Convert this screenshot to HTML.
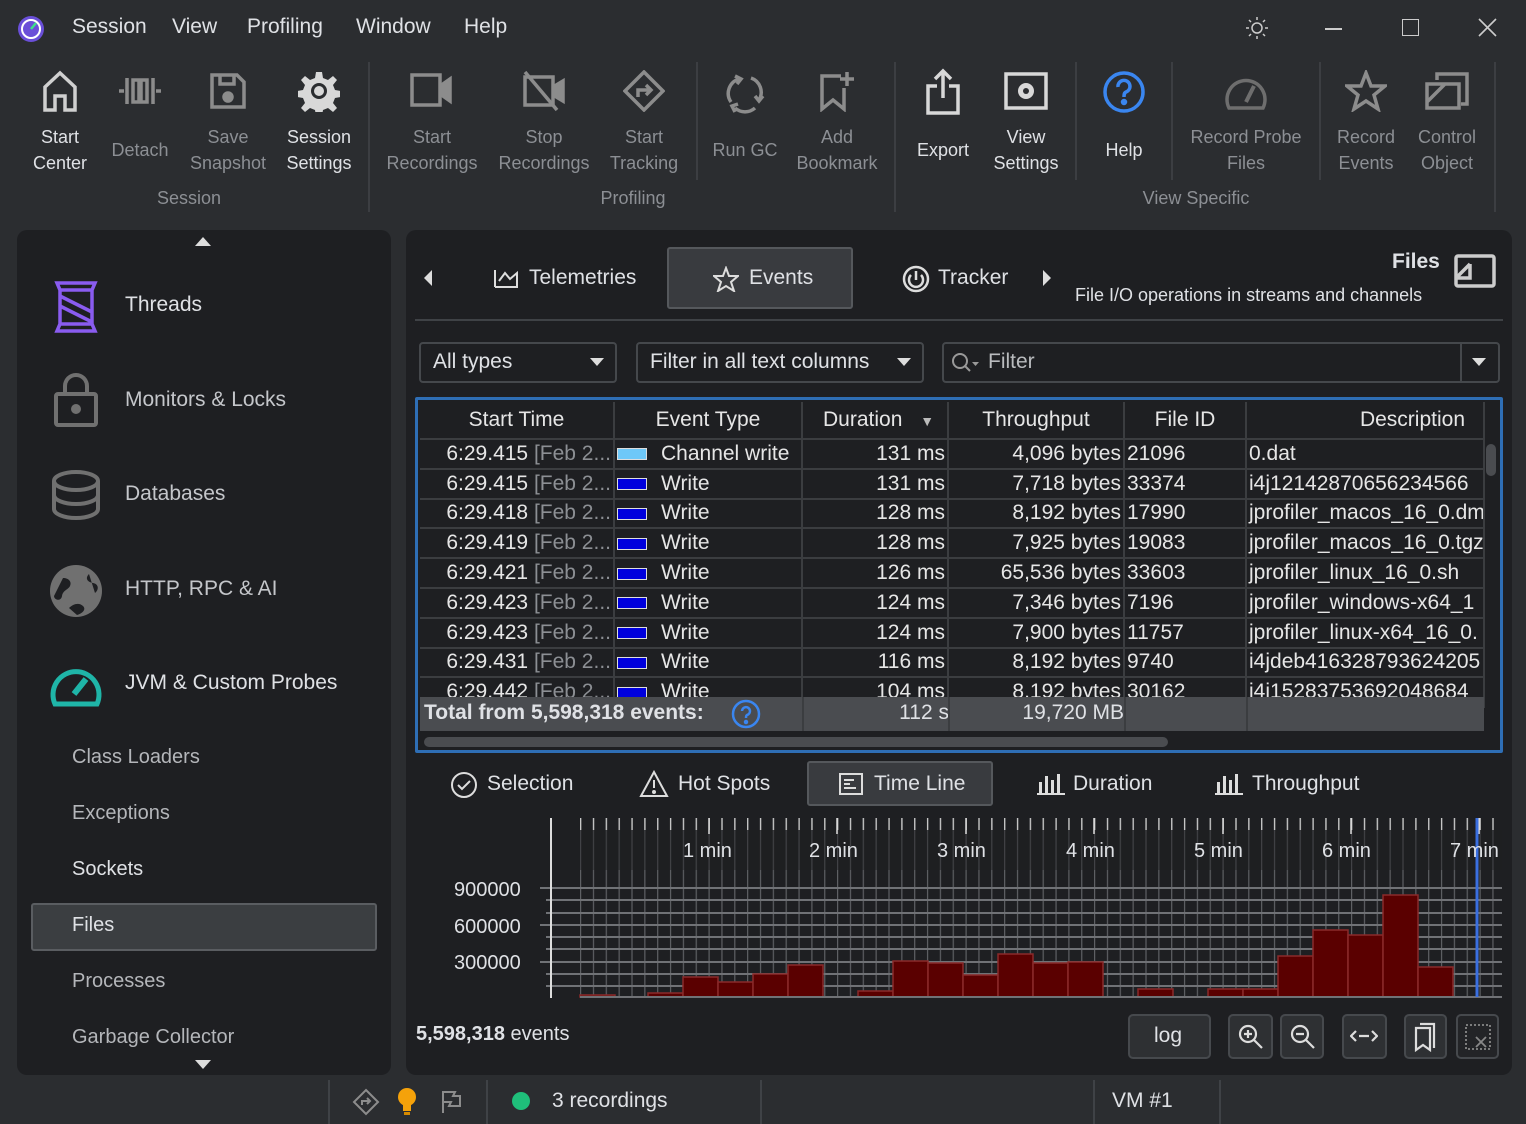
<!DOCTYPE html>
<html><head><meta charset="utf-8">
<style>
*{box-sizing:border-box;margin:0;padding:0}
body{width:1526px;height:1124px;background:#2b2d30;font-family:"Liberation Sans",sans-serif;color:#dfe1e5;position:relative;overflow:hidden}
.a{position:absolute;white-space:nowrap}
.m{font-size:21px;top:15px;color:#dfe1e5}
.tb{position:absolute;text-align:center;font-size:18px;line-height:26px;color:#8c8f94;transform:translateX(-50%);white-space:nowrap}
.tb.en{color:#dfe1e5}
.ic{position:absolute;transform:translateX(-50%)}
.sep{position:absolute;top:62px;width:2px;height:150px;background:#3c3e42}
.sep.s{height:118px}
.grp{position:absolute;font-size:18px;color:#8c8f94;top:188px;transform:translateX(-50%)}
.panel{position:absolute;background:#1e1f22;border-radius:10px}
.si{position:absolute;font-size:21px;color:#c4c6ca}
.sm{position:absolute;font-size:20px;color:#b4b6ba;left:72px}
.combo{position:absolute;border:2px solid #45484c;border-radius:4px;background:#1e1f22;font-size:21px;color:#dfe1e5;padding:6px 12px}
table{border-collapse:collapse;font-size:21px;color:#e6e6e6}
td{height:29.8px;border-right:2px solid #3b3d40;border-bottom:2px solid #3b3d40;padding:0 2px;overflow:hidden;white-space:nowrap;line-height:26px}
.r{text-align:right}
.dim{color:#8c8f94}
.sw{display:inline-block;width:30px;height:12px;border:1px solid #ddd;vertical-align:middle;margin-right:14px;background:#0000dd}
.btn{position:absolute;border:2px solid #46494d;border-radius:5px;background:#2e3033}
.bt{position:absolute;font-size:21px;color:#dfe1e5}
</style></head><body>

<svg class="a" style="left:17px;top:15px" width="28" height="28"><circle cx="14" cy="14" r="13" fill="#6a4fd8"/><circle cx="14" cy="14" r="9" fill="none" stroke="#fff" stroke-width="2"/><path d="M14 14 L19 8" stroke="#3fe08a" stroke-width="2.5"/></svg>
<div class="a m" style="left:72px">Session</div>
<div class="a m" style="left:172px">View</div>
<div class="a m" style="left:247px">Profiling</div>
<div class="a m" style="left:356px">Window</div>
<div class="a m" style="left:464px">Help</div>
<svg class="a" style="left:1245px;top:16px" width="24" height="24" fill="none" stroke="#ccc" stroke-width="1.5"><circle cx="12" cy="12" r="5"/><path d="M12 1v3M12 20v3M1 12h3M20 12h3M4 4l2 2M18 18l2 2M4 20l2-2M18 6l2-2"/></svg>
<div class="a" style="left:1325px;top:28px;width:17px;height:1.5px;background:#ccc"></div>
<div class="a" style="left:1402px;top:19px;width:17px;height:17px;border:1.5px solid #ccc"></div>
<svg class="a" style="left:1478px;top:18px" width="19" height="19" stroke="#ccc" stroke-width="1.6"><path d="M1 1L18 18M18 1L1 18"/></svg>

<svg class="ic" style="left:60px;top:70px" width="36" height="42" fill="none" stroke="#d0d0d0" stroke-width="3.5"><path d="M3 40V17L18 3L33 17V40H23V26H13V40Z"/></svg>
<svg class="ic" style="left:140px;top:72px" width="46" height="38" fill="none" stroke="#8c8c8c" stroke-width="3.5"><path d="M2 19h5M39 19h5M10 6v26M36 6v26M16 8h6v22h-6zM24 8h6v22h-6z"/></svg>
<svg class="ic" style="left:228px;top:72px" width="38" height="38" fill="none" stroke="#8c8c8c" stroke-width="3.5"><path d="M3 3h25l7 7v25H3Z M11 3v9h14V3"/><circle cx="19" cy="25" r="4" fill="#8c8c8c"/></svg>
<svg class="ic" style="left:319px;top:70px" width="42" height="42" fill="#d8d8d8"><path d="M18 2h6l1 6 5 2 5-4 4 4-4 5 2 5 6 1v6l-6 1-2 5 4 5-4 4-5-4-5 2-1 6h-6l-1-6-5-2-5 4-4-4 4-5-2-5-6-1v-6l6-1 2-5-4-5 4-4 5 4 5-2Z"/><circle cx="21" cy="21" r="8" fill="#2b2d30"/><circle cx="21" cy="21" r="5"/></svg>
<svg class="ic" style="left:432px;top:72px" width="44" height="36" fill="none" stroke="#8c8c8c" stroke-width="3.5"><rect x="2" y="3" width="28" height="30"/><path d="M30 14l10-7v22l-10-7" fill="#8c8c8c"/></svg>
<svg class="ic" style="left:544px;top:70px" width="46" height="42" fill="none" stroke="#8c8c8c" stroke-width="3.5"><rect x="4" y="7" width="28" height="28"/><path d="M32 17l10-6v20l-10-6" fill="#8c8c8c"/><path d="M4 2L36 40"/></svg>
<svg class="ic" style="left:644px;top:70px" width="42" height="42" fill="none" stroke="#8c8c8c" stroke-width="3.5"><path d="M21 2L40 21L21 40L2 21Z"/><path d="M15 27v-7h12M23 15l5 5-5 5"/></svg>
<svg class="ic" style="left:745px;top:70px" width="44" height="46" fill="none" stroke="#8c8c8c" stroke-width="3.5"><path d="M8 32A15 15 0 0 1 16 9M28 8A15 15 0 0 1 36 30M32 38A15 15 0 0 1 12 38"/><path d="M12 6l6 3-4 5M40 26l-4 5-4-5M12 42l-3-6 6-2" /></svg>
<svg class="ic" style="left:837px;top:70px" width="40" height="42" fill="none" stroke="#8c8c8c" stroke-width="3.5"><path d="M24 6H5v33l11-9 11 9V18M30 2v14M23 9h14"/></svg>
<svg class="ic" style="left:943px;top:68px" width="36" height="48" fill="none" stroke="#d8d8d8" stroke-width="3.5"><path d="M12 18H3v27h30V18h-9M18 30V3M10 11l8-8 8 8"/></svg>
<svg class="ic" style="left:1026px;top:72px" width="44" height="38"><rect x="2" y="2" width="40" height="34" fill="none" stroke="#d8d8d8" stroke-width="3.5"/><circle cx="22" cy="19" r="8" fill="#d8d8d8"/><circle cx="22" cy="19" r="3" fill="#2b2d30"/></svg>
<svg class="ic" style="left:1124px;top:70px" width="44" height="44" fill="none" stroke="#3a86f0" stroke-width="3.5"><circle cx="22" cy="22" r="19"/><path d="M16 17a6 6 0 1 1 8 5c-2 1-2 3-2 5"/><circle cx="22" cy="32" r="1.5" fill="#3a86f0"/></svg>
<svg class="ic" style="left:1246px;top:72px" width="44" height="40" fill="none" stroke="#6e6e6e" stroke-width="3.5"><path d="M5 36A19 19 0 1 1 39 36Z"/><path d="M22 30L30 14" stroke-width="4"/></svg>
<svg class="ic" style="left:1366px;top:70px" width="42" height="42" fill="none" stroke="#8c8c8c" stroke-width="3.5"><path d="M21 3l5 13h14l-11 9 4 14-12-8-12 8 4-14-11-9h14Z"/></svg>
<svg class="ic" style="left:1447px;top:72px" width="44" height="38" fill="none" stroke="#8c8c8c" stroke-width="3.5"><path d="M12 8V2h30v30h-6M2 12h32v24H2ZM2 30L20 12"/></svg>

<div class="tb en" style="left:60px;top:124px">Start<br>Center</div>
<div class="tb" style="left:140px;top:137px">Detach</div>
<div class="tb" style="left:228px;top:124px">Save<br>Snapshot</div>
<div class="tb en" style="left:319px;top:124px">Session<br>Settings</div>
<div class="tb" style="left:432px;top:124px">Start<br>Recordings</div>
<div class="tb" style="left:544px;top:124px">Stop<br>Recordings</div>
<div class="tb" style="left:644px;top:124px">Start<br>Tracking</div>
<div class="tb" style="left:745px;top:137px">Run GC</div>
<div class="tb" style="left:837px;top:124px">Add<br>Bookmark</div>
<div class="tb en" style="left:943px;top:137px">Export</div>
<div class="tb en" style="left:1026px;top:124px">View<br>Settings</div>
<div class="tb en" style="left:1124px;top:137px">Help</div>
<div class="tb" style="left:1246px;top:124px">Record Probe<br>Files</div>
<div class="tb" style="left:1366px;top:124px">Record<br>Events</div>
<div class="tb" style="left:1447px;top:124px">Control<br>Object</div>
<div class="sep" style="left:368px"></div><div class="sep s" style="left:696px"></div><div class="sep" style="left:894px"></div><div class="sep s" style="left:1075px"></div><div class="sep s" style="left:1171px"></div><div class="sep s" style="left:1319px"></div><div class="sep" style="left:1494px"></div>
<div class="grp" style="left:189px">Session</div>
<div class="grp" style="left:633px">Profiling</div>
<div class="grp" style="left:1196px">View Specific</div>

<div class="panel" style="left:17px;top:230px;width:374px;height:845px"></div>
<svg class="a" style="left:195px;top:237px" width="16" height="9"><path d="M0 9L8 0L16 9Z" fill="#ddd"/></svg>
<svg class="a" style="left:52px;top:280px" width="48" height="54" fill="none" stroke="#8a5cf0" stroke-width="3.5"><path d="M5 3h38l-3 7v34l3 7H5l3-7V10Z M8 10h32M8 44h32M8 16l32 16M8 26l32 16"/></svg>
<div class="si" style="left:125px;top:293px;color:#dfe1e5">Threads</div>
<svg class="a" style="left:54px;top:372px" width="44" height="56" fill="none" stroke="#707070" stroke-width="4"><path d="M11 22V14a11 11 0 0 1 22 0v8"/><rect x="2" y="22" width="40" height="31" rx="2"/><circle cx="22" cy="37" r="3" fill="#707070"/></svg>
<div class="si" style="left:125px;top:388px">Monitors &amp; Locks</div>
<svg class="a" style="left:51px;top:470px" width="50" height="50" fill="none" stroke="#707070" stroke-width="4"><ellipse cx="25" cy="11" rx="22" ry="9"/><path d="M3 11v28c0 5 10 9 22 9s22-4 22-9V11M3 25c0 5 10 9 22 9s22-4 22-9"/></svg>
<div class="si" style="left:125px;top:482px">Databases</div>
<svg class="a" style="left:49px;top:564px" width="54" height="54"><circle cx="27" cy="27" r="26" fill="#707070"/><path d="M14 14c6 0 9 4 7 8s-7 4-8 10-8 4-8 0M40 10c-4 4-2 8 4 9s6 7 2 10M20 44c4-4 10-6 14-2s-2 8-6 9" fill="#1e1f22"/></svg>
<div class="si" style="left:125px;top:577px">HTTP, RPC &amp; AI</div>
<svg class="a" style="left:49px;top:662px" width="54" height="46" fill="none" stroke="#1fb5a8" stroke-width="5"><path d="M6 42A23 23 0 1 1 48 42Z"/><path d="M25 32L37 17" stroke-width="6"/></svg>
<div class="si" style="left:125px;top:671px;color:#dfe1e5">JVM &amp; Custom Probes</div>
<div class="sm" style="top:746px">Class Loaders</div>
<div class="sm" style="top:802px">Exceptions</div>
<div class="sm" style="top:858px;color:#dfe1e5">Sockets</div>
<div class="a" style="left:31px;top:903px;width:346px;height:48px;background:#3b3e41;border:2px solid #5a5d61;border-radius:3px"></div>
<div class="sm" style="top:914px;color:#dfe1e5">Files</div>
<div class="sm" style="top:970px">Processes</div>
<div class="sm" style="top:1026px">Garbage Collector</div>
<svg class="a" style="left:195px;top:1060px" width="16" height="9"><path d="M0 0L8 9L16 0Z" fill="#ddd"/></svg>

<div class="panel" style="left:406px;top:230px;width:1106px;height:845px"></div>
<svg class="a" style="left:423px;top:270px" width="10" height="16"><path d="M9 0L1 8L9 16Z" fill="#ddd"/></svg>
<svg class="a" style="left:493px;top:267px" width="26" height="22" fill="none" stroke="#ddd" stroke-width="2"><path d="M2 20V3M2 20h22V6l-7 6-5-6-6 8"/></svg>
<div class="bt" style="left:529px;top:266px">Telemetries</div>
<div class="a" style="left:667px;top:247px;width:186px;height:62px;background:#393b3f;border:2px solid #55585c;border-radius:3px"></div>
<svg class="a" style="left:713px;top:266px" width="26" height="26" fill="none" stroke="#ddd" stroke-width="2"><path d="M13 2l3 8h9l-7 6 3 9-8-5-8 5 3-9-7-6h9Z"/></svg>
<div class="bt" style="left:749px;top:266px">Events</div>
<svg class="a" style="left:902px;top:265px" width="28" height="28" fill="none" stroke="#ddd" stroke-width="2.5"><circle cx="14" cy="14" r="12"/><path d="M9 10a7 7 0 1 0 10 0M14 6v9"/></svg>
<div class="bt" style="left:938px;top:266px">Tracker</div>
<svg class="a" style="left:1042px;top:270px" width="10" height="16"><path d="M1 0L9 8L1 16Z" fill="#ddd"/></svg>
<div class="a" style="left:1392px;top:250px;font-size:21px;font-weight:bold">Files</div>
<div class="a" style="left:1075px;top:285px;font-size:18px;color:#dfe1e5">File I/O operations in streams and channels</div>
<svg class="a" style="left:1454px;top:254px" width="42" height="34" fill="none" stroke="#ccc" stroke-width="3.5"><rect x="2" y="2" width="38" height="30" rx="2"/><path d="M2 24h14V10M2 24L16 10"/></svg>
<div class="a" style="left:415px;top:319px;width:1088px;height:1.5px;background:#3f4246"></div>

<div class="combo" style="left:419px;top:342px;width:198px;height:41px">All types</div>
<svg class="a" style="left:590px;top:358px" width="14" height="8"><path d="M0 0h14L7 8Z" fill="#ddd"/></svg>
<div class="combo" style="left:636px;top:342px;width:288px;height:41px">Filter in all text columns</div>
<svg class="a" style="left:897px;top:358px" width="14" height="8"><path d="M0 0h14L7 8Z" fill="#ddd"/></svg>
<div class="combo" style="left:942px;top:342px;width:558px;height:41px;color:#b9bbbe;padding-left:44px">Filter</div>
<svg class="a" style="left:951px;top:351px" width="30" height="24" fill="none" stroke="#999" stroke-width="2"><circle cx="9" cy="10" r="7"/><path d="M14 15l5 5"/><path d="M21 11h7l-3.5 4Z" fill="#999" stroke="none"/></svg>
<div class="a" style="left:1460px;top:344px;width:2px;height:37px;background:#45484c"></div>
<svg class="a" style="left:1472px;top:358px" width="14" height="8"><path d="M0 0h14L7 8Z" fill="#ddd"/></svg>

<div class="a" style="left:415px;top:397px;width:1088px;height:356px;border:3px solid #2e6eb5;border-radius:2px;overflow:hidden;background:#1e1f22">
<table style="position:absolute;left:2px;top:2px;width:1064px;table-layout:fixed">
<colgroup><col style="width:194px"><col style="width:188px"><col style="width:146px"><col style="width:176px"><col style="width:122px"><col style="width:238px"></colgroup>
<tr style="text-align:center"><td style="height:37px">Start Time</td><td>Event Type</td><td style="text-align:left;padding-left:20px">Duration <span style="font-size:14px;color:#bbb;margin-left:12px">▼</span></td><td>Throughput</td><td>File ID</td><td style="text-align:right;padding-right:18px">Description</td></tr>
<tr><td class="r">6:29.415 <span class="dim">[Feb 2...</span></td><td><span class="sw" style="background:#6ec8f8"></span>Channel write</td><td class="r">131 ms</td><td class="r">4,096 bytes</td><td>21096</td><td>0.dat</td></tr>
<tr><td class="r">6:29.415 <span class="dim">[Feb 2...</span></td><td><span class="sw"></span>Write</td><td class="r">131 ms</td><td class="r">7,718 bytes</td><td>33374</td><td>i4j12142870656234566</td></tr>
<tr><td class="r">6:29.418 <span class="dim">[Feb 2...</span></td><td><span class="sw"></span>Write</td><td class="r">128 ms</td><td class="r">8,192 bytes</td><td>17990</td><td>jprofiler_macos_16_0.dm</td></tr>
<tr><td class="r">6:29.419 <span class="dim">[Feb 2...</span></td><td><span class="sw"></span>Write</td><td class="r">128 ms</td><td class="r">7,925 bytes</td><td>19083</td><td>jprofiler_macos_16_0.tgz</td></tr>
<tr><td class="r">6:29.421 <span class="dim">[Feb 2...</span></td><td><span class="sw"></span>Write</td><td class="r">126 ms</td><td class="r">65,536 bytes</td><td>33603</td><td>jprofiler_linux_16_0.sh</td></tr>
<tr><td class="r">6:29.423 <span class="dim">[Feb 2...</span></td><td><span class="sw"></span>Write</td><td class="r">124 ms</td><td class="r">7,346 bytes</td><td>7196</td><td>jprofiler_windows-x64_1</td></tr>
<tr><td class="r">6:29.423 <span class="dim">[Feb 2...</span></td><td><span class="sw"></span>Write</td><td class="r">124 ms</td><td class="r">7,900 bytes</td><td>11757</td><td>jprofiler_linux-x64_16_0.</td></tr>
<tr><td class="r">6:29.431 <span class="dim">[Feb 2...</span></td><td><span class="sw"></span>Write</td><td class="r">116 ms</td><td class="r">8,192 bytes</td><td>9740</td><td>i4jdeb416328793624205</td></tr>
<tr><td class="r">6:29.442 <span class="dim">[Feb 2...</span></td><td><span class="sw"></span>Write</td><td class="r">104 ms</td><td class="r">8,192 bytes</td><td>30162</td><td>i4j15283753692048684</td></tr>
</table>
<div style="position:absolute;left:2px;top:297px;width:1064px;height:34px;background:#4a4c50;font-size:21px">
<span style="position:absolute;left:4px;top:4px;font-weight:bold">Total from 5,598,318 events:</span>
<svg style="position:absolute;left:311px;top:2px" width="30" height="30" fill="none" stroke="#3a86f0" stroke-width="2.5"><circle cx="15" cy="15" r="13"/><path d="M11 12a4 4 0 1 1 5 4c-1 .5-1 2-1 3"/><circle cx="15" cy="23" r="1" fill="#3a86f0"/></svg>
<div style="position:absolute;left:382px;top:0;width:2px;height:34px;background:#3b3d40"></div>
<span style="position:absolute;right:535px;top:4px">112 s</span>
<div style="position:absolute;left:528px;top:0;width:2px;height:34px;background:#3b3d40"></div>
<span style="position:absolute;right:360px;top:4px">19,720 MB</span>
<div style="position:absolute;left:704px;top:0;width:2px;height:34px;background:#3b3d40"></div>
<div style="position:absolute;left:826px;top:0;width:2px;height:34px;background:#3b3d40"></div>
</div>
<div style="position:absolute;left:6px;top:337px;width:744px;height:10px;background:#4a4c50;border-radius:5px"></div>
<div style="position:absolute;left:1068px;top:44px;width:10px;height:32px;background:#4a4c50;border-radius:5px"></div>
</div>

<svg class="a" style="left:450px;top:771px" width="28" height="28" fill="none" stroke="#ddd" stroke-width="2"><circle cx="14" cy="14" r="12"/><path d="M8 14l4 4 8-8"/></svg>
<div class="bt" style="left:487px;top:772px">Selection</div>
<svg class="a" style="left:639px;top:770px" width="30" height="28" fill="none" stroke="#ddd" stroke-width="2"><path d="M15 2L28 26H2Z M15 10v8"/><circle cx="15" cy="22" r="1" fill="#ddd"/></svg>
<div class="bt" style="left:678px;top:772px">Hot Spots</div>
<div class="a" style="left:807px;top:761px;width:186px;height:45px;background:#393b3f;border:2px solid #55585c;border-radius:3px"></div>
<svg class="a" style="left:838px;top:772px" width="26" height="24" fill="none" stroke="#ddd" stroke-width="2"><rect x="2" y="2" width="22" height="20"/><path d="M6 8h10M6 12h6M6 16h12"/></svg>
<div class="bt" style="left:874px;top:772px">Time Line</div>
<svg class="a" style="left:1037px;top:772px" width="28" height="24" fill="#ddd"><rect x="2" y="10" width="3" height="12"/><rect x="8" y="4" width="3" height="18"/><rect x="14" y="8" width="3" height="14"/><rect x="20" y="2" width="3" height="20"/><rect x="0" y="21" width="28" height="2"/></svg>
<div class="bt" style="left:1073px;top:772px">Duration</div>
<svg class="a" style="left:1215px;top:772px" width="28" height="24" fill="#ddd"><rect x="2" y="10" width="3" height="12"/><rect x="8" y="4" width="3" height="18"/><rect x="14" y="8" width="3" height="14"/><rect x="20" y="2" width="3" height="20"/><rect x="0" y="21" width="28" height="2"/></svg>
<div class="bt" style="left:1252px;top:772px">Throughput</div>

<svg class="a" style="left:406px;top:810px" width="1106" height="195">
<defs><pattern id="vg" x="174" y="0" width="12.85" height="200" patternUnits="userSpaceOnUse"><rect x="0" y="0" width="1.2" height="200" fill="#5e6064"/></pattern>
<pattern id="tk" x="174" y="0" width="12.85" height="200" patternUnits="userSpaceOnUse"><rect x="0" y="0" width="1.3" height="200" fill="#c8c8c8"/></pattern></defs>
<rect x="174" y="8" width="922" height="179" fill="url(#vg)"/>
<rect x="174" y="8" width="922" height="12" fill="url(#tk)"/>
<g stroke="#707276" stroke-width="2">
<line x1="174" y1="78" x2="1096" y2="78"/><line x1="174" y1="90" x2="1096" y2="90"/><line x1="174" y1="103" x2="1096" y2="103"/><line x1="174" y1="115" x2="1096" y2="115"/><line x1="174" y1="127" x2="1096" y2="127"/><line x1="174" y1="139" x2="1096" y2="139"/><line x1="174" y1="152" x2="1096" y2="152"/><line x1="174" y1="164" x2="1096" y2="164"/><line x1="174" y1="176" x2="1096" y2="176"/>
<line x1="134" y1="78" x2="174" y2="78"/><line x1="140" y1="90" x2="174" y2="90"/><line x1="140" y1="103" x2="174" y2="103"/><line x1="134" y1="115" x2="174" y2="115"/><line x1="140" y1="127" x2="174" y2="127"/><line x1="140" y1="139" x2="174" y2="139"/><line x1="134" y1="152" x2="174" y2="152"/><line x1="140" y1="164" x2="174" y2="164"/><line x1="140" y1="176" x2="174" y2="176"/>
</g>
<rect x="174" y="20" width="922" height="40" fill="#1e1f22" opacity="0.45"/>
<g stroke="#ddd" stroke-width="1.5"><line x1="303" y1="8" x2="303" y2="24"/><line x1="431" y1="8" x2="431" y2="24"/><line x1="560" y1="8" x2="560" y2="24"/><line x1="688" y1="8" x2="688" y2="24"/><line x1="817" y1="8" x2="817" y2="24"/><line x1="945" y1="8" x2="945" y2="24"/><line x1="1073" y1="8" x2="1073" y2="24"/></g>
<line x1="145" y1="8" x2="145" y2="188" stroke="#ddd" stroke-width="2"/>
<g fill="#5a0000" stroke="#8a2a2a" stroke-width="1.5">
<rect x="174" y="185" width="35" height="2"/><rect x="242" y="183" width="35" height="4"/><rect x="277" y="167" width="35" height="20"/><rect x="312" y="172" width="35" height="15"/><rect x="347" y="164" width="35" height="23"/><rect x="382" y="155" width="35" height="32"/><rect x="452" y="181" width="35" height="6"/><rect x="487" y="151" width="35" height="36"/><rect x="522" y="153" width="35" height="34"/><rect x="557" y="165" width="35" height="22"/><rect x="592" y="144" width="35" height="43"/><rect x="627" y="153" width="35" height="34"/><rect x="662" y="152" width="35" height="35"/><rect x="732" y="179" width="35" height="8"/><rect x="802" y="179" width="35" height="8"/><rect x="837" y="179" width="35" height="8"/><rect x="872" y="146" width="35" height="41"/><rect x="907" y="120" width="35" height="67"/><rect x="942" y="125" width="35" height="62"/><rect x="977" y="85" width="35" height="102"/><rect x="1012" y="157" width="35" height="30"/>
</g>
<line x1="174" y1="187" x2="1096" y2="187" stroke="#707276" stroke-width="2"/>
<line x1="1071" y1="8" x2="1071" y2="187" stroke="#3a6fe0" stroke-width="3"/>
<g fill="#dfe1e5" font-family="Liberation Sans" font-size="20">
<text x="277" y="47">1 min</text><text x="403" y="47">2 min</text><text x="531" y="47">3 min</text><text x="660" y="47">4 min</text><text x="788" y="47">5 min</text><text x="916" y="47">6 min</text><text x="1044" y="47">7 min</text>
<text x="48" y="86">900000</text><text x="48" y="123">600000</text><text x="48" y="159">300000</text>
</g>
</svg>

<div class="a" style="left:416px;top:1023px;font-size:20px"><b>5,598,318</b> events</div>
<div class="btn" style="left:1128px;top:1014px;width:83px;height:45px"></div><div class="bt" style="left:1154px;top:1024px">log</div>
<div class="btn" style="left:1228px;top:1014px;width:45px;height:45px"></div>
<svg class="a" style="left:1237px;top:1023px" width="28" height="28" fill="none" stroke="#ddd" stroke-width="2.2"><circle cx="11" cy="11" r="8"/><path d="M17 17l8 8M7 11h8M11 7v8"/></svg>
<div class="btn" style="left:1280px;top:1014px;width:44px;height:45px"></div>
<svg class="a" style="left:1289px;top:1023px" width="28" height="28" fill="none" stroke="#ddd" stroke-width="2.2"><circle cx="11" cy="11" r="8"/><path d="M17 17l8 8M7 11h8"/></svg>
<div class="btn" style="left:1342px;top:1014px;width:45px;height:45px"></div>
<svg class="a" style="left:1350px;top:1028px" width="28" height="16" fill="none" stroke="#ddd" stroke-width="2.2"><path d="M9 8h10M6 3L1 8l5 5M22 3l5 5-5 5"/></svg>
<div class="btn" style="left:1404px;top:1014px;width:43px;height:45px"></div>
<svg class="a" style="left:1412px;top:1022px" width="26" height="30" fill="none" stroke="#ddd" stroke-width="2.2"><path d="M8 2h14v24M4 6h14v22l-7-5-7 5Z"/></svg>
<div class="btn" style="left:1456px;top:1014px;width:43px;height:45px;background:#232427"></div>
<svg class="a" style="left:1464px;top:1023px" width="28" height="28" fill="none" stroke="#888" stroke-width="1.8"><rect x="2" y="2" width="24" height="24" stroke-dasharray="2 2"/><path d="M12 14l10 10M22 14l-10 10"/></svg>

<div class="a" style="left:0;top:1080px;width:1526px;height:44px;background:#2b2d30"></div>
<div class="a" style="left:328px;top:1080px;width:1.5px;height:44px;background:#3f4246"></div>
<div class="a" style="left:486px;top:1080px;width:1.5px;height:44px;background:#3f4246"></div>
<div class="a" style="left:760px;top:1080px;width:1.5px;height:44px;background:#3f4246"></div>
<div class="a" style="left:1093px;top:1080px;width:1.5px;height:44px;background:#3f4246"></div>
<div class="a" style="left:1219px;top:1080px;width:1.5px;height:44px;background:#3f4246"></div>
<svg class="a" style="left:352px;top:1088px" width="28" height="28" fill="none" stroke="#8c8c8c" stroke-width="2"><path d="M14 2L26 14L14 26L2 14Z M10 17v-4h8M15 10l3 3-3 3"/></svg>
<svg class="a" style="left:397px;top:1087px" width="20" height="30"><circle cx="10" cy="10" r="9" fill="#f5a20a"/><rect x="6" y="18" width="8" height="6" fill="#f5a20a"/><rect x="7" y="25" width="6" height="3" fill="#d68a00"/></svg>
<svg class="a" style="left:440px;top:1090px" width="22" height="24" fill="none" stroke="#8c8c8c" stroke-width="2"><path d="M3 23V2h12l-2 4h7v10H9l2-4H3"/></svg>
<div class="a" style="left:512px;top:1092px;width:18px;height:18px;border-radius:50%;background:#1fbf7a"></div>
<div class="a" style="left:552px;top:1089px;font-size:21px">3 recordings</div>
<div class="a" style="left:1112px;top:1089px;font-size:21px">VM #1</div>
</body></html>
